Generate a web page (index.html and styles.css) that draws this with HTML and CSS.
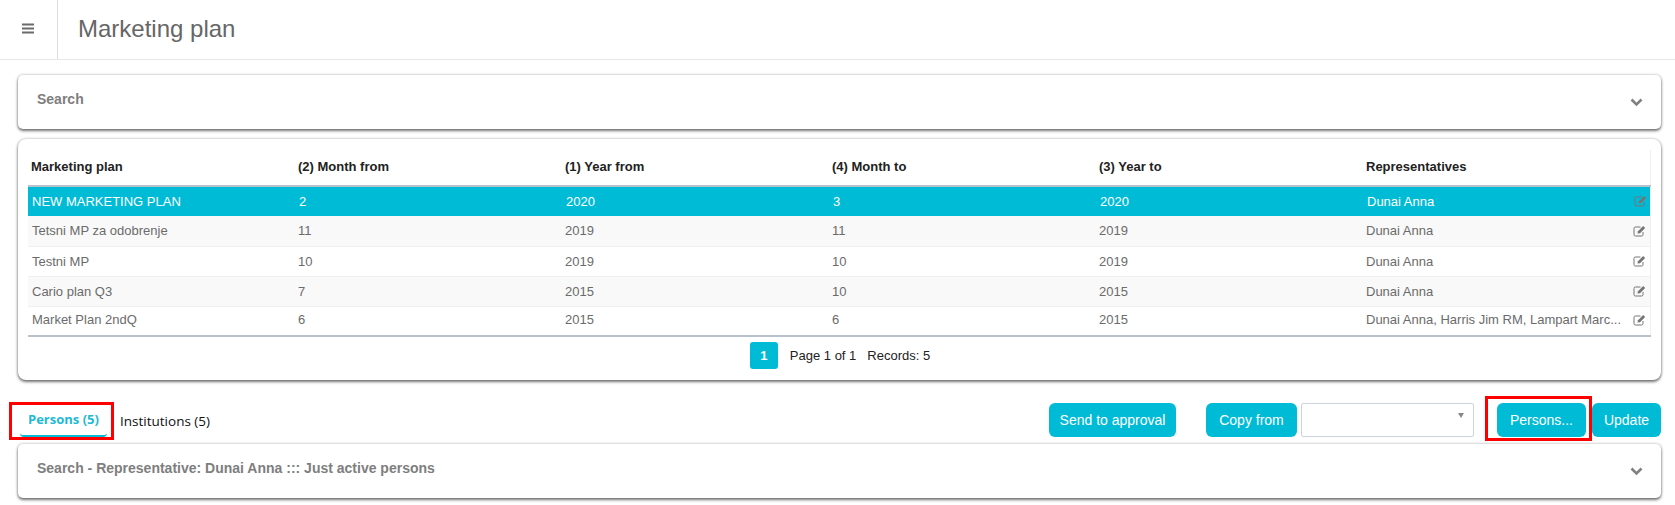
FILE: index.html
```html
<!DOCTYPE html>
<html lang="en">
<head>
<meta charset="utf-8">
<title>Marketing plan</title>
<link rel="stylesheet" href="styles.css">
</head>
<body>
<header class="topbar">
  <div class="menu-cell">
    <svg class="menu-icon" width="13" height="11" viewBox="0 0 13 11"><path d="M0 0.500h12v2H0zM0 4.500h12v2H0zM0 8.500h12v2H0z" fill="#6b6b6b"/></svg>
  </div>
  <h1 class="page-title">Marketing plan</h1>
</header>

<main class="content">
  <section class="panel collapse-panel">
    <span class="panel-title">Search</span>
    <svg class="chevron" width="13" height="9" viewBox="0 0 13 9"><path d="M1.500 1.500 6.500 6.500 11.500 1.500" fill="none" stroke="#808080" stroke-width="2.600"/></svg>
  </section>

  <section class="panel table-panel">
    <table class="grid">
      <colgroup>
        <col class="c"><col class="c"><col class="c"><col class="c"><col class="c"><col>
      </colgroup>
      <thead>
        <tr><th>Marketing plan</th><th>(2) Month from</th><th>(1) Year from</th><th>(4) Month to</th><th>(3) Year to</th><th>Representatives</th></tr>
      </thead>
      <tbody>
        <tr class="selected"><td>NEW MARKETING PLAN</td><td>2</td><td>2020</td><td>3</td><td>2020</td><td><div class="rep"><span class="rep-name">Dunai Anna</span><svg class="edit" viewBox="0 0 13 12"><use href="#edit-icon"/></svg></div></td></tr>
        <tr class="odd"><td>Tetsni MP za odobrenje</td><td>11</td><td>2019</td><td>11</td><td>2019</td><td><div class="rep"><span class="rep-name">Dunai Anna</span><svg class="edit" viewBox="0 0 13 12"><use href="#edit-icon"/></svg></div></td></tr>
        <tr><td>Testni MP</td><td>10</td><td>2019</td><td>10</td><td>2019</td><td><div class="rep"><span class="rep-name">Dunai Anna</span><svg class="edit" viewBox="0 0 13 12"><use href="#edit-icon"/></svg></div></td></tr>
        <tr class="odd"><td>Cario plan Q3</td><td>7</td><td>2015</td><td>10</td><td>2015</td><td><div class="rep"><span class="rep-name">Dunai Anna</span><svg class="edit" viewBox="0 0 13 12"><use href="#edit-icon"/></svg></div></td></tr>
        <tr class="last"><td>Market Plan 2ndQ</td><td>6</td><td>2015</td><td>6</td><td>2015</td><td><div class="rep"><span class="rep-name">Dunai Anna, Harris Jim RM, Lampart Marc...</span><svg class="edit" viewBox="0 0 13 12"><use href="#edit-icon"/></svg></div></td></tr>
      </tbody>
    </table>
    <div class="pager">
      <span class="page-btn">1</span>
      <span class="page-info">Page 1 of 1</span>
      <span class="page-info">Records: 5</span>
    </div>
  </section>

  <div class="toolbar">
    <div class="tabs">
      <div class="tab-mark"><span class="tab active">Persons (5)</span></div>
      <span class="tab inactive">Institutions (5)</span>
    </div>
    <div class="actions">
      <button class="btn send">Send to approval</button>
      <button class="btn copy">Copy from</button>
      <div class="select"><span class="caret"></span></div>
      <div class="btn-mark"><button class="btn persons">Persons...</button></div>
      <button class="btn update">Update</button>
    </div>
  </div>

  <section class="panel collapse-panel">
    <span class="panel-title">Search - Representative: Dunai Anna ::: Just active persons</span>
    <svg class="chevron" width="13" height="9" viewBox="0 0 13 9"><path d="M1.500 1.500 6.500 6.500 11.500 1.500" fill="none" stroke="#808080" stroke-width="2.600"/></svg>
  </section>
</main>

<svg class="defs" width="0" height="0" aria-hidden="true">
  <symbol id="edit-icon" viewBox="0 0 13 12">
    <path d="M10 7v2.600A1.400 1.400 0 0 1 8.600 11H2.400A1.400 1.400 0 0 1 1 9.600V3.400A1.400 1.400 0 0 1 2.400 2H7.500" fill="none" stroke="#757575" stroke-width="1"/>
    <path d="M4.500 8.500 5 6.200 10.200 1 12.200 3 7 8.200Z" fill="#757575"/>
  </symbol>
</svg>
</body>
</html>
```
FILE: styles.css
```css
* { box-sizing: border-box; }
html, body { margin: 0; padding: 0; }
body {
  width: 1675px;
  height: 505px;
  overflow: hidden;
  background: #fff;
  font-family: "Liberation Sans", Arial, sans-serif;
  font-size: 13px;
  color: #6b6b6b;
}
.defs { position: absolute; }

.topbar {
  display: flex;
  align-items: center;
  height: 60px;
  border-bottom: 1px solid #e7e7e7;
}
.menu-cell {
  width: 58px;
  height: 59px;
  border-right: 1px solid #dcdcdc;
  display: flex;
  align-items: center;
  justify-content: center;
}
.menu-icon { margin-top: -2px; }
.page-title {
  margin: 0 0 0 20px;
  font-size: 24px;
  font-weight: 400;
  color: #666;
  position: relative;
  top: -1px;
}

.content { padding: 15px 14px 0 18px; }
.panel {
  background: #fff;
  border-radius: 5px;
  box-shadow: 0 2px 3px rgba(0, 0, 0, .5), 0 0 3px rgba(0, 0, 0, .3);
}
.collapse-panel {
  height: 54px;
  display: flex;
  justify-content: space-between;
  padding: 16px 18px 0 19px;
}
.panel-title {
  font-size: 14px;
  font-weight: 700;
  color: #7e7e7e;
}
.chevron { margin-top: 7px; }

.table-panel {
  margin-top: 10px;
  height: 241px;
  padding: 11px 10px 0;
  border-radius: 8px;
}
.grid {
  width: 1623px;
  border-collapse: collapse;
  table-layout: fixed;
  font-size: 13px;
}
.grid .c { width: 267px; }
.grid th {
  height: 36px;
  padding: 0 3px 3px;
  text-align: left;
  font-weight: 700;
  color: #222;
  border-bottom: 2px solid #b9c2cc;
}
.grid th:last-child, .grid td:last-child { border-right: 1px solid #f0f0f0; }
.grid td {
  height: 30px;
  padding: 0 3px;
  white-space: nowrap;
  overflow: hidden;
  border-bottom: 1px solid #f0f0f0;
}
.grid td:first-child { padding-left: 4px; }
.grid .last td { border-bottom: 2px solid #b9c2cc; padding-bottom: 2px; }
.grid .odd td { background: #f9f9f9; }
.grid .selected td {
  background: #00bbd6;
  color: #fff;
  padding-left: 4px;
  padding-bottom: 1px;
  border-bottom: 0;
}
.rep { display: flex; align-items: center; justify-content: space-between; gap: 8px; }
.rep-name { flex: 1; min-width: 0; white-space: nowrap; }
.edit { width: 13px; height: 12px; flex: none; margin-right: 1px; }
.selected .edit { margin-right: 0; }

.pager {
  display: flex;
  align-items: center;
  justify-content: center;
  gap: 12px;
  margin-top: 5px;
  padding-left: 1px;
  color: #222;
}
.page-info + .page-info { margin-left: -1px; }
.page-btn {
  width: 28px;
  height: 27px;
  border-radius: 3px;
  background: #00bbd6;
  color: #fff;
  font-weight: 700;
  display: flex;
  align-items: center;
  justify-content: center;
}

.toolbar {
  display: flex;
  justify-content: space-between;
  align-items: flex-start;
  height: 45px;
  margin: 16px 0 3px -9px;
}
.tabs {
  display: flex;
  align-items: center;
  font-family: "Open Sans", sans-serif;
  color: #111;
  padding-top: 6px;
}
.tab-mark {
  width: 105px;
  height: 38px;
  border: 3px solid #f00;
  margin-right: 6px;
  padding: 0 4px 0 8px;
}
.tab.active {
  display: block;
  height: 32px;
  padding: 5px 0 0 8px;
  font-size: 13px;
  font-weight: 700;
  color: #1fb9d3;
  border-bottom: 2px solid #00bbd6;
  border-radius: 0 0 4px 4px;
}
.tab.inactive { font-size: 13.500px; }
.actions { display: flex; align-items: flex-start; padding-top: 7px; }
.btn {
  height: 34px;
  border: 0;
  border-radius: 6px;
  background: #00bbd6;
  color: #fff;
  font-family: "Liberation Sans", Arial, sans-serif;
  font-size: 14px;
  padding: 0;
}
.send { width: 127px; }
.copy { width: 91px; margin-left: 30px; }
.select {
  width: 173px;
  height: 34px;
  margin-left: 4px;
  border: 1px solid #ccd4dc;
  border-radius: 2px;
  display: flex;
  justify-content: flex-end;
  padding: 9px 9px 0 0;
}
.caret {
  width: 0;
  height: 0;
  border-left: 3.500px solid transparent;
  border-right: 3.500px solid transparent;
  border-top: 5.500px solid #888;
}
.btn-mark {
  width: 107px;
  height: 45px;
  margin: -7px 0 0 11px;
  border: 3px solid #f00;
  padding: 4px 3px 0 9px;
}
.persons { display: block; width: 100%; }
.update { width: 69px; }
```
